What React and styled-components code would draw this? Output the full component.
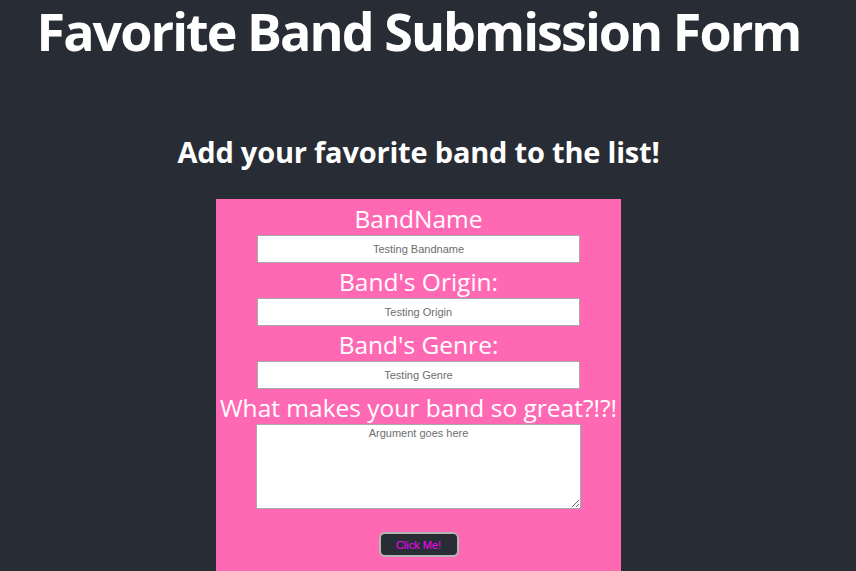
import React from "react";
import styled, { createGlobalStyle } from "styled-components";

const Global = createGlobalStyle`
  html, body { margin: 0; padding: 0; background: #282c34; }
  body { font-family: "Open Sans", "Noto Sans", sans-serif; overflow: hidden; }
`;

const Page = styled.div`
  box-sizing: border-box;
  width: 837px;
  min-height: 571px;
  display: flex;
  flex-direction: column;
  align-items: center;
  color: #ffffff;
  text-align: center;
`;

const Title = styled.h1`
  margin: 0;
  font-size: 52px;
  line-height: 62px;
  font-weight: 700;
  letter-spacing: -1.95px;
  white-space: nowrap;
`;

const Subtitle = styled.h2`
  margin: 70px 0 0;
  font-size: 29px;
  line-height: 40px;
  font-weight: 700;
  letter-spacing: -0.2px;
  white-space: nowrap;
`;

const Card = styled.form`
  margin-top: 27px;
  width: 405px;
  background: #ff69b4;
  display: flex;
  flex-direction: column;
  align-items: center;
  padding: 1px 0 20px;
`;

const Label = styled.label`
  display: block;
  box-sizing: border-box;
  font-size: 24.5px;
  line-height: 32px;
  padding-top: 3px;
  height: 35px;
  font-weight: 400;
  color: #ffffff;
  white-space: nowrap;
`;

const Input = styled.input`
  box-sizing: border-box;
  width: 323px;
  height: 28px;
  margin: 0;
  border: 1px solid #a9a9a9;
  background: #fff;
  text-align: center;
  font-family: "Liberation Sans", Arial, sans-serif;
  font-size: 11px;
  padding: 0;
  &::placeholder { color: #6e6e6e; }
`;

const Area = styled.textarea`
  box-sizing: border-box;
  width: 325px;
  height: 85px;
  border: 1px solid #a9a9a9;
  background: #fff;
  text-align: center;
  font-family: "Liberation Sans", Arial, sans-serif;
  font-size: 11px;
  padding: 2px;
  margin: 0;
  display: block;
  &::placeholder { color: #6e6e6e; }
`;

const Button = styled.button`
  box-sizing: border-box;
  margin-top: 23px;
  width: 80px;
  height: 25px;
  background: #282c34;
  border: 2px solid #b4b4b4;
  border-radius: 6px;
  color: #ff00ff;
  font-family: "Liberation Sans", Arial, sans-serif;
  font-size: 11px;
  padding: 0;
`;

const fields = [
  { label: "BandName", ph: "Testing Bandname" },
  { label: "Band's Origin:", ph: "Testing Origin" },
  { label: "Band's Genre:", ph: "Testing Genre" },
];

export default function App() {
  return (
    <>
      <Global />
      <Page>
        <Title>Favorite Band Submission Form</Title>
        <Subtitle>Add your favorite band to the list!</Subtitle>
        <Card onSubmit={(e) => e.preventDefault()}>
          {fields.map((f) => (
            <React.Fragment key={f.label}>
              <Label>{f.label}</Label>
              <Input placeholder={f.ph} />
            </React.Fragment>
          ))}
          <Label>What makes your band so great?!?!</Label>
          <Area placeholder="Argument goes here" />
          <Button type="submit">Click Me!</Button>
        </Card>
      </Page>
    </>
  );
}
